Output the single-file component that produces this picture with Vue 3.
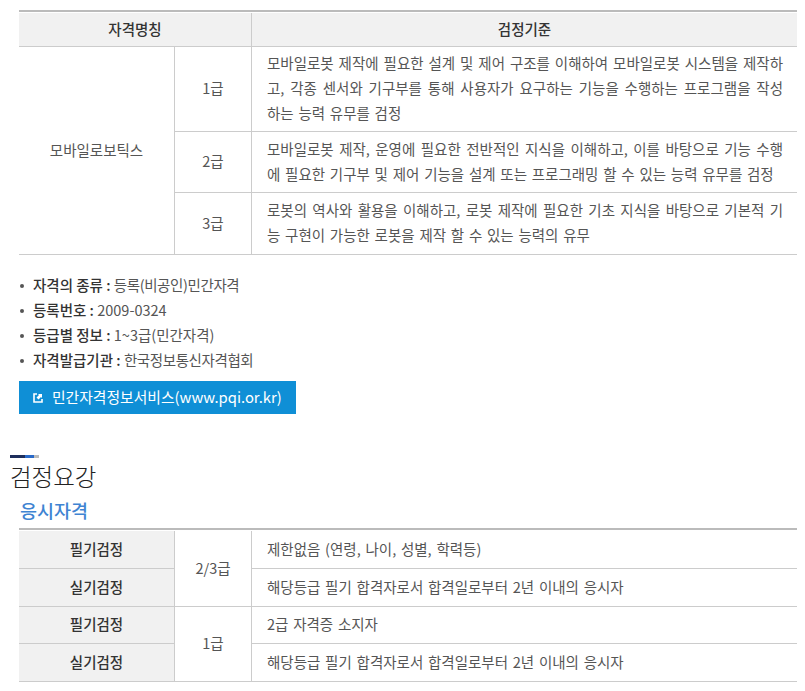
<script setup>
const info = [
  { label: '자격의 종류 :', value: '등록(비공인)민간자격', tight: true },
  { label: '등록번호 :', value: '2009-0324', tight: false },
  { label: '등급별 정보 :', value: '1~3급(민간자격)', tight: false },
  { label: '자격발급기관 :', value: '한국정보통신자격협회', tight: true },
]
</script>

<template>
  <main class="page">
    <table class="tbl first">
      <colgroup><col class="c1" /><col class="c2" /><col /></colgroup>
      <thead>
        <tr class="rh"><th colspan="2" class="lead">자격명칭</th><th>검정기준</th></tr>
      </thead>
      <tbody>
        <tr class="r1">
          <td rowspan="3" class="ctr lead">모바일로보틱스</td>
          <td class="ctr">1급</td>
          <td class="txt">모바일로봇 제작에 필요한 설계 및 제어 구조를 이해하여 모바일로봇 시스템을 제작하고, 각종 센서와 기구부를 통해 사용자가 요구하는 기능을 수행하는 프로그램을 작성하는 능력 유무를 검정</td>
        </tr>
        <tr class="r2">
          <td class="ctr">2급</td>
          <td class="txt">모바일로봇 제작, 운영에 필요한 전반적인 지식을 이해하고, 이를 바탕으로 기능 수행에 필요한 기구부 및 제어 기능을 설계 또는 프로그래밍 할 수 있는 능력 유무를 검정</td>
        </tr>
        <tr class="r3">
          <td class="ctr">3급</td>
          <td class="txt">로봇의 역사와 활용을 이해하고, 로봇 제작에 필요한 기초 지식을 바탕으로 기본적 기능 구현이 가능한 로봇을 제작 할 수 있는 능력의 유무</td>
        </tr>
      </tbody>
    </table>

    <ul class="info">
      <li v-for="row in info" :key="row.label"><b>{{ row.label }}</b> <span :class="{ tight: row.tight }">{{ row.value }}</span></li>
    </ul>

    <a class="btn">
      <svg class="ico" width="10" height="10" viewBox="0 0 10 10" aria-hidden="true">
        <path d="M4 1H1v8h8V6" fill="none" stroke="#fff" stroke-width="1.6" />
        <path d="M5 1h4v4L8 4 5.5 6.5 3.5 4.5 6 2z" fill="#fff" />
      </svg>
      민간자격정보서비스(www.pqi.or.kr)
    </a>

    <div class="bar"><i class="b1"></i><i class="b2"></i><i class="b3"></i></div>
    <h2 class="title">검정요강</h2>
    <h3 class="sub">응시자격</h3>

    <table class="tbl second">
      <colgroup><col class="c1" /><col class="c2" /><col /></colgroup>
      <tbody>
        <tr class="s1"><th class="lead">필기검정</th><td rowspan="2" class="ctr">2/3급</td><td class="txt">제한없음 (연령, 나이, 성별, 학력등)</td></tr>
        <tr class="s1"><th class="lead">실기검정</th><td class="txt">해당등급 필기 합격자로서 합격일로부터 2년 이내의 응시자</td></tr>
        <tr class="s2"><th class="lead">필기검정</th><td rowspan="2" class="ctr">1급</td><td class="txt">2급 자격증 소지자</td></tr>
        <tr class="s1"><th class="lead">실기검정</th><td class="txt">해당등급 필기 합격자로서 합격일로부터 2년 이내의 응시자</td></tr>
      </tbody>
    </table>
  </main>
</template>

<style>
html, body { margin: 0; background: #fff; }
</style>

<style scoped>
.page {
  width: 805px;
  height: 691px;
  overflow: hidden;
  box-sizing: border-box;
  padding: 10px 8px 0 19px;
  font-family: "Noto Sans CJK KR", "Noto Sans", sans-serif;
  font-size: 14.5px;
  word-spacing: 1.5px;
  color: #555;
}
.tbl {
  width: 778px;
  table-layout: fixed;
  border-collapse: separate;
  border-spacing: 0;
  border-top: 2px solid #bbb;
  padding-top: 1px;
}
.c1 { width: 155px; }
.c2 { width: 77px; }
th, td {
  padding: 0 0 3px;
  font-weight: 400;
  border-bottom: 1px solid #ccc;
  border-left: 1px solid #ccc;
  line-height: 25px;
}
th.lead, td.lead { border-left: 0; }
th {
  background: #f1f1f1;
  color: #333;
  font-weight: 500;
  text-align: center;
}
.ctr { text-align: center; }
.txt { padding: 0 14px 3px 15px; text-align: justify; }
.rh { height: 34px; }
.r1 { height: 85px; }
.r2 { height: 61px; }
.r3 { height: 62px; }
.s1 { height: 38px; }
.s2 { height: 37px; }
.info {
  list-style: none;
  margin: 17px 0 0;
  padding: 0;
  line-height: 25px;
  word-spacing: 0;
}
.info li { position: relative; padding-left: 14px; }
.info li::before {
  content: "";
  position: absolute;
  left: 1px;
  top: 12px;
  width: 4px;
  height: 4px;
  border-radius: 50%;
  background: #555;
}
.info b { font-weight: 500; color: #333; }
.tight { letter-spacing: -0.4px; }
.btn {
  display: flex;
  align-items: center;
  width: 277px;
  height: 33px;
  box-sizing: border-box;
  margin-top: 9px;
  padding: 0 0 3px 14px;
  background: #0f8fd6;
  color: #fff;
  font-size: 14.8px;
  word-spacing: 0;
}
.ico { margin: 3px 9px 0 0; }
.bar {
  display: flex;
  height: 3px;
  margin: 41px 0 0 -9px;
}
.bar i { display: block; height: 3px; }
.b1 { width: 15px; background: #1e2f5c; }
.b2 { width: 9px; background: #2a6ac8; }
.b3 { width: 5px; background: #bbb; }
.title {
  margin: 0 0 0 -9px;
  font-size: 23.5px;
  font-weight: 300;
  line-height: 36px;
  color: #222;
  word-spacing: 0;
}
.sub {
  margin: 3px 0 0 1px;
  font-size: 18.5px;
  font-weight: 500;
  line-height: 26px;
  color: #3f84d2;
}
.second { margin-top: 5px; }
</style>
